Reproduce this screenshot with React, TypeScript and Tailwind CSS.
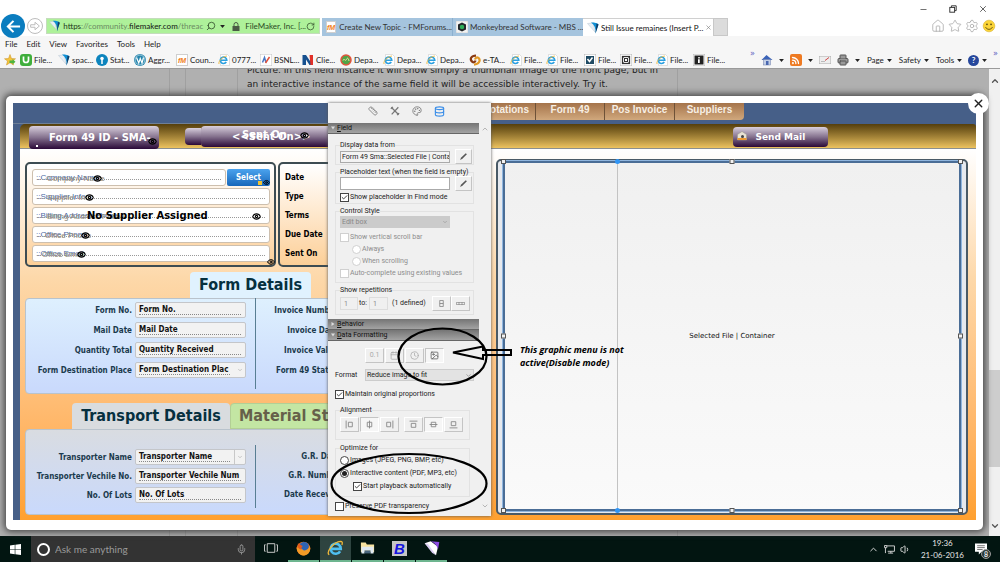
import type { ReactNode } from 'react';
import {
  Calendar,
  Check,
  ChevronDown,
  ChevronUp,
  Clock,
  Database,
  Eye,
  Home,
  Image as ImageIcon,
  Mic,
  Minus,
  Palette,
  Printer,
  RotateCw,
  Rss,
  Ruler,
  Search,
  Settings,
  Star,
  Volume1,
  X,
} from 'lucide-react';

/* ---------- small logos ---------- */

function FoldLogo({ className = 'size-3' }: { className?: string }) {
  return (
    <svg viewBox="0 0 24 24" className={className}>
      <path d="M1 3 L13 2 L16 20 Z" fill="#e6eef5" stroke="#b9c7d3" strokeWidth="1" />
      <path d="M8 1 C16 1 21 2 23 5 L17 23 C18 13 15 6 8 1 Z" fill="#0f8fd4" />
      <path d="M19 3 L23 5 L17 23 Z" fill="#123a63" />
    </svg>
  );
}

function ExplorerLogo({ className = 'size-3' }: { className?: string }) {
  return (
    <svg viewBox="0 0 24 24" className={className} fill="none">
      <path d="M18.5 16 A7.2 7.2 0 1 1 19.5 12.5 H7" stroke="#4fc0f2" strokeWidth="3.6" />
      <path d="M3 21 C-2 16 10 3 19 2 C22 2 22 4 21 7" stroke="#f0b93a" strokeWidth="1.8" />
    </svg>
  );
}

function FavLogo({ kind }: { kind: string }) {
  if (kind === 'fold') return <FoldLogo />;
  if (kind === 'ie') {
    return (
      <svg viewBox="0 0 24 24" className="size-3" fill="none">
        <path d="M5 1 H19 L23 5 V23 H5 Z" fill="#fff" stroke="#c3c3c3" />
        <path d="M16.5 16 A6.4 6.4 0 1 1 17.5 12.5 H6" stroke="#2a9fe0" strokeWidth="3.4" />
        <path d="M2 20 C0 15 9 5 18 4" stroke="#f0b93a" strokeWidth="1.8" />
      </svg>
    );
  }
  if (kind === 'udemy') {
    return (
      <svg viewBox="0 0 24 24" className="size-3" fill="none">
        <rect width="24" height="24" rx="6" fill="#3fae3c" />
        <path d="M7 5 V12 A5 5 0 0 0 17 12 V5" stroke="#fff" strokeWidth="3.4" />
      </svg>
    );
  }
  if (kind === 'stat') {
    return (
      <svg viewBox="0 0 24 24" className="size-3">
        <circle cx="12" cy="12" r="12" fill="#0d84bd" />
        <circle cx="12" cy="9" r="3.5" fill="#fff" />
        <path d="M10.5 10 H13.5 V20 H10.5 Z" fill="#fff" />
      </svg>
    );
  }
  if (kind === 'wp') {
    return (
      <svg viewBox="0 0 24 24" className="size-3" fill="none">
        <circle cx="12" cy="12" r="12" fill="#2585ad" />
        <circle cx="12" cy="12" r="9.8" stroke="#fff" strokeWidth="1" />
        <path d="M5 7 L9.5 18 L12.5 9 L16 18 L19 7" stroke="#fff" strokeWidth="2.4" />
      </svg>
    );
  }
  if (kind === 'fm') {
    return (
      <span className="flex size-3 items-center justify-center border border-[#cfcfcf] bg-white font-['Liberation_Sans'] text-[7px] font-bold italic leading-none text-[#f08020]">
        fM
      </span>
    );
  }
  if (kind === 'bsnl') {
    return (
      <svg viewBox="0 0 24 24" className="size-3" fill="none">
        <rect x=".5" y=".5" width="23" height="23" fill="#fff" stroke="#c3c3c3" />
        <path d="M5 17 L9 7 L12 17" stroke="#4a78c4" strokeWidth="3" />
        <path d="M11 18 L19 6" stroke="#e0503a" strokeWidth="3" />
      </svg>
    );
  }
  if (kind === 'clie') {
    return (
      <svg viewBox="0 0 24 24" className="size-3">
        <path d="M1 2 H8 L16 14 V2 H22 V22 H15 L8 11 V22 H1 Z" fill="#16508f" />
        <path d="M15 2 H22 V22 H17 Z" fill="#e03028" />
      </svg>
    );
  }
  if (kind === 'seal') {
    return (
      <svg viewBox="0 0 24 24" className="size-3" fill="none">
        <circle cx="12" cy="12" r="10" fill="#52a447" stroke="#e2533c" strokeWidth="3" />
        <path d="M6 13 C8 7 11 16 13 11 S17 9 18 14" stroke="#f1dfa0" strokeWidth="2" />
      </svg>
    );
  }
  if (kind === 'etax') {
    return (
      <svg viewBox="0 0 24 24" className="size-3" fill="none">
        <path d="M14 3 C4 3 2 10 5 14 S12 17 13 13" stroke="#8a3a12" strokeWidth="4.5" />
        <path d="M10 21 C20 21 23 13 20 9 S13 7 12 11" stroke="#e39a25" strokeWidth="4.5" />
      </svg>
    );
  }
  if (kind === 'check') {
    return (
      <svg viewBox="0 0 24 24" className="size-3" fill="none">
        <rect x=".5" y=".5" width="23" height="23" fill="#fff" stroke="#b5b5b5" />
        <rect x="4" y="4" width="16" height="16" fill="#1f4a63" />
        <path d="M7 10 L11 15 L17 7" stroke="#fff" strokeWidth="3" />
      </svg>
    );
  }
  if (kind === 'square') {
    return (
      <svg viewBox="0 0 24 24" className="size-3" fill="none">
        <rect x=".5" y=".5" width="23" height="23" fill="#fff" stroke="#b5b5b5" />
        <rect x="5" y="5" width="14" height="14" stroke="#333" strokeWidth="2.5" />
        <path d="M5 5 L19 19 M19 5 L5 19" stroke="#333" />
        <rect x="9" y="9" width="6" height="6" fill="#fff" stroke="#333" strokeWidth="2" />
      </svg>
    );
  }
  return (
    <svg viewBox="0 0 24 24" className="size-3">
      <rect x=".5" y=".5" width="23" height="23" fill="#fff" stroke="#b5b5b5" />
      <rect x="3" y="3" width="18" height="18" fill="#222" />
      <path d="M10.5 6 H13.5 V9 H10.5 Z M10 10.5 H13.5 V18 H10 Z" fill="#fff" />
    </svg>
  );
}

function Caret() {
  return (
    <svg viewBox="0 0 8 5" className="h-[3px] w-[5px]">
      <path d="M0 0 H8 L4 5 Z" fill="#222" />
    </svg>
  );
}

/* ---------- browser chrome ---------- */

const favorites = [
  { kind: 'udemy', label: 'File...', w: 'w-[38px]' },
  { kind: 'fold', label: 'spac...', w: 'w-[38px]' },
  { kind: 'stat', label: 'Stat...', w: 'w-[38px]' },
  { kind: 'wp', label: 'Aggr...', w: 'w-[42px]' },
  { kind: 'fm', label: 'Coun...', w: 'w-[42px]' },
  { kind: 'ie', label: '0777...', w: 'w-[42px]' },
  { kind: 'bsnl', label: 'BSNL...', w: 'w-[42px]' },
  { kind: 'clie', label: 'Clie...', w: 'w-[38px]' },
  { kind: 'seal', label: 'Depa...', w: 'w-[43px]' },
  { kind: 'ie', label: 'Depa...', w: 'w-[43px]' },
  { kind: 'ie', label: 'Depa...', w: 'w-[43px]' },
  { kind: 'etax', label: 'e-TA...', w: 'w-[41px]' },
  { kind: 'ie', label: 'File...', w: 'w-[36px]' },
  { kind: 'ie', label: 'File...', w: 'w-[38px]' },
  { kind: 'check', label: 'File...', w: 'w-[36px]' },
  { kind: 'square', label: 'File...', w: 'w-[36px]' },
  { kind: 'ie', label: 'File...', w: 'w-[37px]' },
  { kind: 'info', label: 'File...', w: 'w-[36px]' },
];

function BrowserTop() {
  return (
    <header className="relative flex h-9 items-end bg-white text-[8px] text-[#222]">
      <div className="absolute right-[12px] top-[4px] flex items-center gap-[21px] text-[#444]">
        <button aria-label="Minimize"><Minus className="size-[9px]" /></button>
        <button aria-label="Restore">
          <svg viewBox="0 0 10 10" className="size-[8px]" fill="none" stroke="#333" strokeWidth="1.2">
            <path d="M3 3 V1 H9 V7 H7" />
            <rect x="1" y="3" width="6" height="6" />
          </svg>
        </button>
        <button aria-label="Close"><X className="size-[10px]" /></button>
      </div>
      <button aria-label="Back" className="mb-[-2px] ml-px flex size-6 shrink-0 items-center justify-center rounded-full bg-[#0b7dbf]">
        <svg viewBox="0 0 16 16" className="size-[15px]" fill="none" stroke="#fff" strokeWidth="2.2">
          <path d="M15 8 H2.5 M8 2 L2 8 L8 14" />
        </svg>
      </button>
      <button aria-label="Forward" className="mb-[2px] ml-[2px] flex size-4 shrink-0 items-center justify-center rounded-full border border-[#bdbdbd]">
        <svg viewBox="0 0 16 16" className="size-[10px]" fill="none" stroke="#bdbdbd" strokeWidth="1.6">
          <path d="M1 6 H8 V2 L15 8 L8 14 V10 H1 Z" />
        </svg>
      </button>
      <div className="mb-[2px] ml-[3px] flex h-4 w-[274px] shrink-0 items-center border border-[#c4dcbc] bg-[#aef19a] pl-[2px] pr-1">
        <FoldLogo />
        <span className="ml-[3px] w-[141px] shrink-0 whitespace-nowrap text-[#6b8b62]">
          <span className="text-[#1e3a18]">https</span>://community.<span className="text-[#111]">filemaker.com</span>/threac
        </span>
        <Search className="ml-[2px] size-[10px] shrink-0 -scale-x-100 text-[#35502e]" />
        <span className="ml-1"><Caret /></span>
        <svg viewBox="0 0 16 18" className="ml-[7px] h-[9px] w-[8px] shrink-0" fill="none">
          <path d="M4 8 V5 A4 4 0 0 1 12 5 V8" stroke="#4a5a45" strokeWidth="2" />
          <rect x="1" y="8" width="14" height="10" fill="#4a5a45" />
        </svg>
        <span className="ml-[5px] flex-1 whitespace-nowrap text-[#2c4a25]">FileMaker, Inc. [...</span>
        <RotateCw className="size-[9px] shrink-0 text-[#35502e]" />
      </div>
      <nav className="ml-[2px] flex h-[18px] shrink-0 text-[#333]">
        <a href="#forums" className="flex w-[131px] items-center gap-[3px] whitespace-nowrap border-r border-[#8cb0cf] bg-[#a5c4de] pl-1">
          <FavLogo kind="fm" />
          Create New Topic - FMForums...
        </a>
        <a href="#mbs" className="flex w-[130px] items-center gap-[2px] whitespace-nowrap bg-[#a5c4de] pl-[3px]">
          <svg viewBox="0 0 24 24" className="size-3 shrink-0">
            <rect width="24" height="24" fill="#f3f3f3" stroke="#bbb" />
            <path d="M12 3 L20 7 V17 L12 21 L4 17 V7 Z" fill="#23262a" />
            <circle cx="12" cy="12" r="4.5" fill="#2fae5a" />
          </svg>
          Monkeybread Software - MBS ...
        </a>
        <a href="#thread" className="flex w-[130px] items-center gap-[2px] border-t border-[#d0d0d0] bg-white pl-1 pr-[3px] text-[#111]">
          <span className="shrink-0"><FoldLogo /></span>
          <span className="whitespace-nowrap">Still Issue remaines (Insert P...</span>
          <X className="ml-auto size-[7px] shrink-0 text-[#777]" />
        </a>
        <button aria-label="New tab" className="w-[15px] border border-[#c8c8c8] bg-[#dcdcdc]" />
      </nav>
      <div className="mb-[3px] ml-auto mr-1 flex gap-[3px] text-[#a5a5a5]">
        <Home className="size-[14px]" strokeWidth={1.3} />
        <Star className="size-[14px]" strokeWidth={1.3} />
        <Settings className="size-[14px]" strokeWidth={1.3} />
        <svg viewBox="0 0 24 24" className="size-[14px]" fill="none">
          <circle cx="12" cy="12" r="10" fill="#fbd437" stroke="#d8b12a" />
          <circle cx="8.5" cy="9" r="1.5" fill="#5a4a10" />
          <circle cx="15.5" cy="9" r="1.5" fill="#5a4a10" />
          <path d="M6 14 C9 19 15 19 18 14" stroke="#5a4a10" strokeWidth="1.5" />
        </svg>
      </div>
    </header>
  );
}

function BrowserBars() {
  return (
    <div className="border-b border-[#9a9a9a] bg-[#f6f6f6] text-[8px] text-[#222]">
      <nav className="flex h-4 items-center gap-[9px] pl-[5px]">
        {['File', 'Edit', 'View', 'Favorites', 'Tools', 'Help'].map((m) => (
          <button key={m}>{m}</button>
        ))}
      </nav>
      <div className="flex h-4 items-center">
        <span className="flex w-5 shrink-0 pl-1">
          <svg viewBox="0 0 24 24" className="size-3">
            <path d="M12 1 L15 9 L23 9.5 L17 14 L19 22 L12 17.5 L5 22 L7 14 L1 9.5 L9 9 Z" fill="#f5c33b" stroke="#c98f1c" />
            <path d="M11 13 H17 V10 L23 15.5 L17 21 V18 H11 Z" fill="#4fb53f" />
          </svg>
        </span>
        {favorites.map((f, i) => (
          <a key={i} href={`#fav-${i}`} className={`flex shrink-0 items-center gap-[2px] whitespace-nowrap ${f.w}`}>
            <span className="shrink-0"><FavLogo kind={f.kind} /></span>
            {f.label}
          </a>
        ))}
        <div className="ml-auto flex items-center gap-[6px] whitespace-nowrap pr-[2px]">
          <span className="-mt-3 font-['DejaVu_Sans',sans-serif] text-[#5a5ac0]">»</span>
          <svg viewBox="0 0 24 24" className="size-3">
            <path d="M1 12 L11 2 L23 12 Z" fill="#3a63b8" />
            <rect x="5" y="11" width="14" height="11" fill="#c3cfe6" stroke="#6a7ba8" />
            <rect x="10" y="14" width="5" height="8" fill="#4a68b0" />
          </svg>
          <Caret />
          <span className="flex size-3 items-center justify-center rounded-[2px] bg-[#ee7a22]"><Rss className="size-[9px] text-white" strokeWidth={3.5} /></span>
          <Caret />
          <svg viewBox="0 0 24 16" className="h-2 w-3" fill="none">
            <rect x=".5" y=".5" width="23" height="15" fill="#eee" stroke="#aaa" />
            <path d="M4 11 H12" stroke="#888" />
            <path d="M12 9 L20 3" stroke="#d04848" strokeWidth="2" />
          </svg>
          <Printer className="size-3 fill-[#999] text-[#555]" />
          <Caret />
          <button className="flex items-center gap-[3px] pl-px">Page <Caret /></button>
          <button className="flex items-center gap-[3px] pl-px">Safety <Caret /></button>
          <button className="flex items-center gap-[3px] pl-px">Tools <Caret /></button>
          <button className="flex items-center gap-[3px]">
            <span className="flex size-[11px] items-center justify-center rounded-full bg-[#26479c] font-bold text-white">?</span>
            <Caret />
          </button>
          <span className="-mt-3 font-['DejaVu_Sans',sans-serif] text-[#5a5ac0]">»</span>
        </div>
      </div>
    </div>
  );
}

/* ---------- layout form, left side ---------- */

function LineText({ text, className = '' }: { text: string; className?: string }) {
  return (
    <span className={`relative block whitespace-nowrap ${className}`}>
      <span className="absolute inset-x-0 bottom-[2px] border-b border-dotted border-[#888]" />
      {text}
    </span>
  );
}

function SupplierRow({ label, shadow, eye, children }: { label: string; shadow: string; eye: string; children?: ReactNode }) {
  return (
    <div className="flex gap-px">
      <div className="relative h-[17px] flex-1 rounded-[3px] border border-[#cdbfae] bg-white pl-[3px] text-[8px] leading-[15px] text-[#4a6aa5]">
        {label}
        <span className={`absolute top-px text-[#8d8778] ${shadow}`}>{label.slice(2)}</span>
        <span className="absolute bottom-[5px] left-1 right-1 border-b border-dotted border-[#999]" />
        <Eye className={`absolute top-1 size-[9px] text-black ${eye}`} strokeWidth={3} />
      </div>
      {children}
    </div>
  );
}

function DetailRow({ label, value, kind }: { label: string; value: string; kind?: 'select' | 'combo' }) {
  return (
    <div className="flex h-4 items-center gap-[3px]">
      <span className="w-[106px] shrink-0 whitespace-nowrap pt-[2px] text-right text-[8px] text-[#1b3a4d]">{label}</span>
      <div className="flex h-4 w-[111px] rounded-[2px] border border-[#c4c6ca] bg-[#f2f2f2] text-[8px] leading-[13px] text-[#111]">
        <LineText text={value} className="ml-[3px] mr-1 flex-1" />
        {kind && (
          <span className={`flex w-[11px] items-center justify-center ${kind === 'combo' ? 'border-l border-[#c8c8c8]' : ''}`}>
            <ChevronDown className="size-[6px] text-[#999]" />
          </span>
        )}
      </div>
    </div>
  );
}

function SideLabels({ items, className }: { items: string[]; className: string }) {
  return (
    <div className={`flex shrink-0 flex-col text-right text-[8px] leading-4 text-[#1b3a4d] ${className}`}>
      {items.map((t) => (
        <span key={t} className="whitespace-nowrap">{t}</span>
      ))}
    </div>
  );
}

function FormSide() {
  return (
    <section className="flex min-w-0 flex-col overflow-hidden bg-[#465f88] font-['DejaVu_Sans_Condensed','DejaVu_Sans',sans-serif] font-bold">
      <div className="h-[21px] border-b border-[#6e7f97]" />
      <div className="ml-[7px] flex h-6 shrink-0 items-start rounded-tl-[5px] bg-linear-to-b from-[#553f0c] to-[#edc35f] pt-[2px] font-['DejaVu_Sans',sans-serif] text-[10px] text-white">
        <div className="relative ml-[9px] h-[23px] w-[130px] shrink-0 rounded bg-linear-to-b from-[#d9d0dd] via-[#85728e] to-[#2b0838] pl-5 pt-[6px] leading-[12px]">
          Form 49 ID - SMA-
          <Eye className="absolute bottom-[3px] right-[2px] size-[9px] text-black" strokeWidth={3} />
          <span className="absolute bottom-[2px] left-[7px] size-[2px] bg-white" />
        </div>
        <div className="mt-[2px] ml-[26px] h-[17px] w-4 shrink-0 rounded-l bg-linear-to-b from-[#d9d0dd] via-[#85728e] to-[#2b0838]" />
        <div className="relative h-[21px] w-[160px] shrink-0 rounded-l bg-linear-to-b from-[#d9d0dd] via-[#85728e] to-[#2b0838] pl-[31px] pt-[5px] leading-[12px]">
          &lt;&lt;Sent On&gt;&gt;
          <span className="absolute left-[41px] top-[3px]">Sent On</span>
          <Eye className="absolute left-[99px] top-[5px] size-[9px] text-black" strokeWidth={3} />
        </div>
      </div>
      <div className="ml-[7px] flex-1 border-t border-[#8a8f90] bg-linear-to-b from-white via-[#fdd8a9] via-35% to-[#ffa02e] pb-[5px] pl-[5px] pt-[13px]">
        <div className="flex gap-[2px]">
          <div className="relative flex h-[105px] w-[251px] shrink-0 flex-col gap-[2px] rounded-[5px] border-2 border-[#3d4c52] bg-linear-to-b from-white to-[#fccf97] pl-[5px] pr-1 pt-[5px] font-['Liberation_Sans',sans-serif] font-normal">
            <SupplierRow label="::Company Name" shadow="left-[14px]" eye="left-[60px]">
              <button className="relative h-[17px] w-[43px] rounded-[2px] bg-linear-to-b from-[#4ba3ee] to-[#1767ba] font-['DejaVu_Sans_Condensed','DejaVu_Sans',sans-serif] text-[8px] font-bold text-white">
                Select
                <span className="absolute bottom-px right-[8px] size-1 bg-[#f1c232]" />
                <Eye className="absolute bottom-0 right-0 size-[7px] text-black" strokeWidth={3} />
              </button>
            </SupplierRow>
            <SupplierRow label="::Supplier Info" shadow="left-[14px]" eye="left-[52px]" />
            <SupplierRow label="::Billing Address Phone" shadow="left-[14px]" eye="right-2" />
            <SupplierRow label="::Office Phone" shadow="left-[12px]" eye="left-[48px]" />
            <SupplierRow label="::Office Email" shadow="left-[9px]" eye="left-[44px]" />
            <span className="absolute left-[60px] top-[44px] whitespace-nowrap font-['DejaVu_Sans',sans-serif] text-[10px] font-bold leading-4 text-black">No Supplier Assigned</span>
            <Eye className="absolute -bottom-px -right-px size-[8px] text-black" strokeWidth={3} />
          </div>
          <div className="flex h-[105px] w-[120px] shrink-0 flex-col gap-[3px] rounded-[5px] border-2 border-[#3d4c52] bg-linear-to-b from-white to-[#fccf97] pl-[5px] pt-[6px] text-[8px] leading-4 text-black">
            {['Date', 'Type', 'Terms', 'Due Date', 'Sent On'].map((t) => (
              <span key={t}>{t}</span>
            ))}
          </div>
        </div>

        <h2 className="ml-[165px] mt-[5px] flex h-[26px] w-[121px] items-center justify-center whitespace-nowrap rounded-t bg-[#e0f2fe] text-[16px] text-[#06303f]">Form Details</h2>
        <div className="flex h-24 w-[340px] rounded-l border border-[#b9c3cc] bg-linear-to-b from-[#def0fe] to-[#c9d9fc] pt-[3px]">
          <div className="flex flex-col gap-1">
            <DetailRow label="Form No." value="Form No." />
            <DetailRow label="Mail Date" value="Mail Date" />
            <DetailRow label="Quantity Total" value="Quantity Received" />
            <DetailRow label="Form Destination Place" value="Form Destination Plac" kind="select" />
          </div>
          <div className="-mt-1 ml-[9px] h-[91px] w-px bg-[#587e93]" />
          <SideLabels items={['Invoice Number', 'Invoice Date', 'Invoice Value', 'Form 49 Status']} className="w-[82px] gap-1 pt-px" />
        </div>

        <div className="ml-[47px] mt-[9px] flex h-[26px] w-[340px] text-[16px]">
          <h2 className="flex w-[158px] shrink-0 items-center justify-center whitespace-nowrap rounded-t bg-[#d9dcdf] text-[#06303f]">Transport Details</h2>
          <h2 className="flex w-[180px] shrink-0 items-center whitespace-nowrap rounded-t border border-[#b2cf95] bg-[#c3e6a3] pl-2 text-[#66604a]">Material Status</h2>
        </div>
        <div className="flex h-[86px] w-[340px] rounded-l border border-[#b9c3cc] bg-linear-to-b from-[#d9dce1] to-[#c9d9fc] pt-[19px]">
          <div className="flex flex-col gap-[3px]">
            <DetailRow label="Transporter Name" value="Transporter Name" kind="combo" />
            <DetailRow label="Transporter Vechile No." value="Transporter Vechile Num" />
            <DetailRow label="No. Of Lots" value="No. Of Lots" />
          </div>
          <div className="-mt-1 ml-[9px] h-[63px] w-px bg-[#587e93]" />
          <SideLabels items={['G.R. Date', 'G.R. Number', 'Date Receved']} className="w-[84px] gap-[3px]" />
        </div>
      </div>
    </section>
  );
}

/* ---------- inspector palette ---------- */

function Group({ title, className = '', children }: { title: string; className?: string; children: ReactNode }) {
  return (
    <fieldset className={`border border-[#e2e2e2] pl-1 ${className}`}>
      <legend className="h-2 whitespace-nowrap leading-[8px] text-[#222]">{title}</legend>
      {children}
    </fieldset>
  );
}

function Tick({ label, type = 'checkbox', name, checked, disabled, className = '' }: {
  label: string;
  type?: 'checkbox' | 'radio';
  name?: string;
  checked?: boolean;
  disabled?: boolean;
  className?: string;
}) {
  const round = type === 'radio';
  return (
    <label className={`flex h-3 items-center gap-px whitespace-nowrap ${disabled ? 'text-[#8d8d8d]' : 'text-[#222]'} ${className}`}>
      <span className="relative flex size-[9px] shrink-0 items-center justify-center">
        <input
          type={type}
          name={name}
          defaultChecked={checked}
          disabled={disabled}
          className={`size-[9px] appearance-none border bg-white ${round ? 'rounded-full' : ''} ${disabled ? 'border-[#d0d0d0]' : 'border-[#444]'}`}
        />
        {checked && !round && <Check className="pointer-events-none absolute size-[7px]" strokeWidth={3} />}
        {checked && round && <span className="pointer-events-none absolute size-[5px] rounded-full bg-[#222]" />}
      </span>
      {label}
    </label>
  );
}

function Tool({ label, pressed, className = 'w-[19px]', children }: { label: string; pressed?: boolean; className?: string; children: ReactNode }) {
  return (
    <button
      aria-label={label}
      className={`flex h-[15px] items-center justify-center border text-[#aaa] ${pressed ? 'border-b-white border-r-white border-l-[#c4c4c4] border-t-[#c4c4c4] bg-[#f6f6f6]' : 'border-b-[#c4c4c4] border-r-[#c4c4c4] border-l-white border-t-white bg-[#f0f0f0]'} ${className}`}
    >
      {children}
    </button>
  );
}

function SlantedPencil() {
  return (
    <svg viewBox="0 0 16 16" className="size-[9px]">
      <path d="M2 14 L3.500 10 L12 2 L14 4 L6 12 Z" fill="#555" />
    </svg>
  );
}

function SectionBar({ title, open }: { title: string; open?: boolean }) {
  return (
    <h3 className="flex h-[11px] items-center gap-[2px] border-b border-[#666] bg-linear-to-b from-[#757575] to-[#a3a3a3] pl-[3px] leading-none text-[#111]">
      <svg viewBox="0 0 8 8" className="size-1">
        <path d={open ? 'M0 1 H8 L4 7 Z' : 'M1 0 L7 4 L1 8 Z'} fill="#ddd" />
      </svg>
      <span><u>{title[0]}</u>{title.slice(1)}</span>
    </h3>
  );
}

const alignIcons = [
  { label: 'Left', d: 'M2 1 V15 M6 4 H13 V12 H6 Z' },
  { label: 'Center', d: 'M8 1 V15 M4 4 H12 V12 H4 Z' },
  { label: 'Right', d: 'M14 1 V15 M3 4 H10 V12 H3 Z' },
  { label: 'Top', d: 'M1 2 H15 M4 6 H12 V13 H4 Z' },
  { label: 'Middle', d: 'M1 8 H15 M4 4 H12 V12 H4 Z' },
  { label: 'Bottom', d: 'M1 14 H15 M4 3 H12 V10 H4 Z' },
];

function Inspector() {
  return (
    <aside className="relative z-10 h-[413px] bg-[#f0f0f0] font-['Roboto',sans-serif] text-[7px] text-[#222] shadow-[0_0_3px_#555]">
      <div className="flex h-5 items-center justify-center gap-3 pb-1 pr-[6px] text-[#777]">
        <Ruler className="size-[10px]" />
        <svg viewBox="0 0 24 24" className="size-[10px]" fill="none" stroke="#777" strokeWidth="3">
          <path d="M3 3 L21 21 M20 3 L4 20 M2 7 L7 2 M17 22 L22 17" />
        </svg>
        <Palette className="size-[10px]" />
        <Database className="size-[11px] text-[#3d8fe8]" strokeWidth={2.5} />
      </div>
      <div className="flex">
        <div className="w-[151px] shrink-0">
          <SectionBar title="Field" open />
          <div className="flex flex-col gap-[3px] pb-1 pl-[7px] pr-[5px] pt-[7px]">
            <Group title="Display data from" className="h-6">
              <div className="flex items-center gap-[5px]">
                <input aria-label="Display data from" readOnly value="Form 49 Sma::Selected File | Contai" className="h-3 w-[110px] border border-[#aaa] bg-[#f3f3f3] pl-px" />
                <Tool label="Edit source" className="w-[17px]"><SlantedPencil /></Tool>
              </div>
            </Group>
            <Group title="Placeholder text (when the field is empty)" className="h-9">
              <div className="flex items-center gap-[5px]">
                <input aria-label="Placeholder text" className="h-[13px] w-[110px] border border-[#aaa] bg-white" />
                <Tool label="Edit placeholder" className="w-[17px]"><SlantedPencil /></Tool>
              </div>
              <Tick label="Show placeholder in Find mode" checked />
            </Group>
            <Group title="Control Style" className="h-[76px]">
              <div className="relative mb-[3px] mt-px w-[110px]">
                <select aria-label="Control style" disabled className="block h-3 w-full appearance-none bg-[#cbcbcb] pl-[2px] text-[#888]">
                  <option>Edit box</option>
                </select>
                <ChevronDown className="pointer-events-none absolute right-[2px] top-[3px] size-[6px] text-[#888]" />
              </div>
              <Tick label="Show vertical scroll bar" disabled />
              <Tick label="Always" type="radio" name="scroll" disabled className="ml-3" />
              <Tick label="When scrolling" type="radio" name="scroll" disabled className="ml-3" />
              <Tick label="Auto-complete using existing values" disabled />
            </Group>
            <Group title="Show repetitions" className="h-[29px]">
              <div className="flex items-center pt-[2px]">
                <input aria-label="From repetition" readOnly value="1" className="h-[13px] w-[18px] border border-[#ddd] pl-[3px] text-[#888]" />
                <span className="w-[11px] pl-px">to:</span>
                <input aria-label="To repetition" readOnly value="1" className="h-[13px] w-[19px] border border-[#ddd] pl-[3px] text-[#888]" />
                <span className="w-[44px] whitespace-nowrap pl-1">(1 defined)</span>
                <Tool label="Vertical"><svg viewBox="0 0 8 8" className="size-[7px]" fill="none" stroke="#888"><path d="M2 .5 H6 V7.5 H2 Z M2 4 H6" /></svg></Tool>
                <Tool label="Horizontal"><svg viewBox="0 0 12 4" className="h-[3px] w-[9px]" fill="none" stroke="#888"><path d="M.5 .5 H11.5 V3.5 H.5 Z M4 0 V4 M8 0 V4" /></svg></Tool>
              </div>
            </Group>
          </div>
          <SectionBar title="Behavior" />
          <SectionBar title="Data Formatting" open />
          <div className="pl-[7px] pr-[5px] pt-[7px]">
            <div className="flex gap-px pl-[30px]">
              <Tool label="Number">0.1</Tool>
              <Tool label="Date"><Calendar className="size-[9px]" /></Tool>
              <Tool label="Time"><Clock className="size-[9px]" /></Tool>
              <Tool label="Graphic" pressed><ImageIcon className="size-[9px] text-[#555]" /></Tool>
            </div>
            <label className="relative mt-[6px] flex h-3 items-center">
              <span className="w-[30px] shrink-0">Format</span>
              <select className="h-3 w-[109px] appearance-none border border-[#ccc] bg-[#e3e3e3] pl-px">
                <option>Reduce image to fit</option>
              </select>
              <ChevronDown className="pointer-events-none absolute right-[2px] top-[3px] size-[7px] text-[#777]" />
            </label>
            <Tick label="Maintain original proportions" checked className="mt-[7px]" />
            <Group title="Alignment" className="mr-1 mt-[6px] h-[34px]">
              <div className="flex gap-px pt-[3px]">
                {alignIcons.map((a, i) => (
                  <Tool key={a.label} label={a.label} pressed={a.label === 'Center' || a.label === 'Middle'} className={i === 3 ? 'ml-1 w-[19px]' : 'w-[19px]'}>
                    <svg viewBox="0 0 16 16" className="size-[9px]" fill="none" stroke="#888" strokeWidth="1.6"><path d={a.d} /></svg>
                  </Tool>
                ))}
              </div>
            </Group>
            <Group title="Optimize for" className="mr-1 mt-1 h-[53px]">
              <div className="flex flex-col gap-px pt-[2px]">
                <Tick label="Images (JPEG, PNG, BMP, etc)" type="radio" name="optimize" />
                <Tick label="Interactive content (PDF, MP3, etc)" type="radio" name="optimize" checked />
                <Tick label="Start playback automatically" checked className="ml-[13px]" />
              </div>
            </Group>
            <Tick label="Preserve PDF transparency" className="mt-[3px]" />
          </div>
        </div>
        <div className="flex flex-1 flex-col items-center justify-between py-[2px] text-[#999]">
          <ChevronUp className="size-2" />
          <ChevronDown className="size-2" />
        </div>
      </div>

      {/* hand drawn marks */}
      <svg viewBox="0 0 200 413" className="pointer-events-none absolute left-0 top-0 h-[413px] w-[200px] overflow-visible" fill="none" stroke="#000">
        <ellipse cx="114.500" cy="253.500" rx="44" ry="28" strokeWidth="2.200" />
        <ellipse cx="81" cy="380.500" rx="77.500" ry="29.500" strokeWidth="2.200" />
        <path d="M125 249.500 L155 243.500 V247 H183 V252 H155 V256 Z" strokeWidth="2" />
      </svg>
      <p className="absolute left-[192px] top-[240px] whitespace-nowrap font-['Open_Sans','Noto_Sans',sans-serif] text-[9px] font-bold italic leading-[13px] text-black">
        This graphic menu is not
        <br />
        active(Disable mode)
      </p>
    </aside>
  );
}

/* ---------- layout form, right side ---------- */

function Handle({ className }: { className: string }) {
  return <span className={`absolute size-[5px] border border-[#555] bg-[#f2f2f2] ${className}`} />;
}

function ContainerSide() {
  return (
    <section className="flex min-w-0 flex-col bg-[#465f88]">
      <div className="flex h-[21px] items-start font-['Liberation_Sans',sans-serif] text-[10px] font-bold text-[#f7efe4]">
        <nav className="flex h-[17px] divide-x divide-[#6e5238] overflow-hidden rounded-br-[4px] bg-linear-to-b from-[#a5744b] to-[#d0a87d]">
          <a href="#quotations" className="flex w-[45px] justify-end pr-[6px] leading-[13px]">Quotations</a>
          <a href="#form49" className="w-[69px] text-center leading-[13px]">Form 49</a>
          <a href="#pos" className="w-[70px] text-center leading-[13px]">Pos Invoice</a>
          <a href="#suppliers" className="w-[69px] text-center leading-[13px]">Suppliers</a>
        </nav>
      </div>
      <div className="flex h-6 shrink-0 justify-center rounded-tr-[3px] bg-linear-to-b from-[#553f0c] to-[#edc35f] pt-[3px]">
        <button className="ml-[93px] flex h-5 w-[95px] items-center gap-[9px] rounded bg-linear-to-b from-[#d9d0dd] via-[#85728e] to-[#2b0838] pl-1 pt-[2px] font-['DejaVu_Sans',sans-serif] text-[9px] font-bold text-white">
          <svg viewBox="0 0 20 20" className="mb-1 size-[10px]">
            <path d="M1 7 L10 1 L19 7 V18 H1 Z" fill="#e8e2d4" stroke="#998" />
            <path d="M1 14 H19 V18 H1 Z" fill="#ee9a32" />
            <circle cx="11" cy="11" r="3" fill="#444" />
          </svg>
          Send Mail
        </button>
      </div>
      <div className="flex flex-1 border-t border-[#8a8f90] bg-linear-to-b from-white via-[#fdd8a9] via-35% to-[#ffa02e] pb-[5px] pl-[5px] pr-2 pt-[10px]">
        <div className="flex flex-1 rounded-[5px] border-2 border-[#4a5a66] bg-[#e6e9ee] px-[5px] pb-[2px]">
          <div className="relative flex flex-1 items-center justify-center border-2 border-[#4a6d96] bg-linear-to-b from-[#f0f0f0] to-[#fafafa] font-['DejaVu_Sans',sans-serif] text-[7px] text-[#111] outline outline-[#8fb5de]">
            Selected File | Container
            <span className="absolute inset-y-0 left-[112px] w-px bg-[#c3c3c3]" />
            <span className="absolute -top-[4px] left-[110px] size-[5px] rounded-full bg-[#2f95f5]" />
            <span className="absolute -bottom-[4px] left-[110px] size-[5px] rounded-full bg-[#2f95f5]" />
            <Handle className="-left-[4px] -top-[4px]" />
            <Handle className="-right-[4px] -top-[4px]" />
            <Handle className="-bottom-[4px] -left-[4px]" />
            <Handle className="-bottom-[4px] -right-[4px]" />
            <Handle className="-top-[4px] left-1/2 -translate-x-1/2" />
            <Handle className="-bottom-[4px] left-1/2 -translate-x-1/2" />
            <Handle className="-left-[4px] top-1/2 -translate-y-1/2" />
            <Handle className="-right-[4px] top-1/2 -translate-y-1/2" />
          </div>
        </div>
      </div>
    </section>
  );
}

/* ---------- taskbar ---------- */

function TaskButton({ label, active, running = true, children }: { label: string; active?: boolean; running?: boolean; children: ReactNode }) {
  return (
    <button
      aria-label={label}
      className={`flex h-[26px] items-center justify-center border-b-2 ${running ? 'w-[31px] border-[#6db58f]' : 'w-8 border-transparent'} ${active ? 'bg-[#2e4440]' : ''}`}
    >
      {children}
    </button>
  );
}

function Taskbar() {
  return (
    <footer className="flex h-[26px] shrink-0 items-center bg-[#021511] text-[8px] text-[#e4e4e4]">
      <button aria-label="Start" className="flex w-[31px] justify-center">
        <svg viewBox="0 0 22 22" className="size-[11px]" fill="#fff">
          <path d="M0 3 L9.500 1.700 V10.400 H0 Z M10.700 1.500 L22 0 V10.400 H10.700 Z M0 11.600 H9.500 V20.300 L0 19 Z M10.700 11.600 H22 V22 L10.700 20.500 Z" />
        </svg>
      </button>
      <label className="flex h-[26px] w-[224px] items-center bg-[#333] pl-[6px] pr-2">
        <span className="size-[13px] shrink-0 rounded-full border-2 border-white" />
        <input placeholder="Ask me anything" aria-label="Ask me anything" className="ml-[5px] min-w-0 flex-1 bg-transparent text-[10px] placeholder:text-[#9a9a9a]" />
        <Mic className="size-[11px] text-[#999]" />
      </label>
      <div className="flex gap-px">
        <TaskButton label="Task view" running={false}>
          <svg viewBox="0 0 26 18" className="h-[10px] w-[14px]" fill="none" stroke="#ccc" strokeWidth="1.800">
            <path d="M6 1 H20 V17 H6 Z M3 3 H1 V15 H3 M23 3 H25 V15 H23" />
          </svg>
        </TaskButton>
        <TaskButton label="Firefox">
          <svg viewBox="0 0 24 24" className="size-[15px]">
            <circle cx="12" cy="12" r="11" fill="#e8731c" />
            <circle cx="13" cy="9" r="7.500" fill="#2c64b4" />
            <path d="M1 9 C3 13 8 10 10 13 C13 17 19 15 22 8 C25 18 17 24 11 23 C5 22 1 17 1 9 Z" fill="#f39a26" />
            <path d="M3 4 C6 5 8 7 11 8 C9 10 8 11 9 14 C4 13 2 9 3 4 Z" fill="#e25a1a" />
          </svg>
        </TaskButton>
        <TaskButton label="Internet Explorer" active><ExplorerLogo className="size-[17px]" /></TaskButton>
        <TaskButton label="File Explorer">
          <svg viewBox="0 0 24 20" className="h-3 w-[15px]">
            <path d="M1 1 H9 L11 4 H23 V17 H1 Z" fill="#f7e3a0" />
            <path d="M2 8 H22 V19 H17 V14 H7 V19 H2 Z" fill="#dfe9f2" />
            <path d="M7 14 H17 V19 H7 Z" fill="#49657c" />
          </svg>
        </TaskButton>
        <TaskButton label="Busy">
          <span className="flex size-[15px] items-center justify-center bg-[#c6c6c6] font-['Liberation_Sans',sans-serif] text-[15px] font-bold italic leading-none text-[#1414e0]">B</span>
        </TaskButton>
        <TaskButton label="FileMaker">
          <svg viewBox="0 0 24 24" className="size-[16px]">
            <path d="M1 5 L10 2 L21 10 L18 23 Z" fill="#fff" />
            <path d="M10 2 L23 3 L21 14 C19 8 16 4 10 2 Z" fill="#8d4be0" />
            <path d="M1 5 L6 6 L18 23 L12 19 Z" fill="#d9cdf2" />
          </svg>
        </TaskButton>
      </div>
      <div className="ml-auto flex items-center gap-[5px] pr-[9px]">
        <ChevronUp className="size-[11px]" />
        <svg viewBox="0 0 24 20" className="h-[9px] w-[11px]" fill="none" stroke="#ddd" strokeWidth="2">
          <path d="M6 2 H23 V14 H8 M15 14 V18 M9 18 H20 M1 1 H6 V6 H1 Z M3 6 V18" />
        </svg>
        <Volume1 className="size-[11px]" />
        <div className="ml-[5px] text-center leading-[12px]">
          <div>19:36</div>
          <div>21-06-2016</div>
        </div>
        <div className="relative ml-[6px] w-[16px]">
          <svg viewBox="0 0 22 22" className="size-[12px]">
            <path d="M0 1 H22 V16 H12 L7 21 V16 H0 Z" fill="#fff" />
            <path d="M4 5 H18 M4 8.500 H18 M4 12 H14" stroke="#555" strokeWidth="1.500" />
          </svg>
          <span className="absolute -bottom-1 right-0 flex size-[10px] items-center justify-center rounded-full border border-[#999] bg-[#2c3a37] text-[7px] font-bold leading-none">8</span>
        </div>
      </div>
    </footer>
  );
}

export default function App() {
  return (
    <div className="flex min-h-screen flex-col overflow-hidden bg-[#b0b0b0] font-['Lato',sans-serif]">
      <BrowserTop />
      <BrowserBars />
      <main className="flex flex-1">
        <div className="relative min-w-0 flex-1">
          {/* page behind the dialog */}
          <div className="absolute inset-0 flex overflow-hidden">
            <div className="w-[170px] shrink-0 border-r border-[#a0a0a0]" />
            <div className="w-4 shrink-0 border-r border-[#a0a0a0]" />
            <div className="w-[52px] shrink-0 border-r border-[#a0a0a0]" />
            <p className="-mt-[6px] w-[440px] shrink-0 whitespace-nowrap border-r border-[#a0a0a0] pl-[9px] font-['DejaVu_Sans',sans-serif] text-[9px] leading-[14px] text-[#222]">
              Picture. In this field instance it will show simply a thumbnail image of the front page, but in
              <br />
              an interactive instance of the same field it will be accessible interactively. Try it.
            </p>
          </div>
          <div role="dialog" aria-label="Attached image" className="relative mx-[6px] mb-[6px] mt-[27px] rounded-[5px] bg-white px-[7px] pb-[10px] pt-[7px] shadow-[0_0_7px_2px_#444]">
            <div className="grid grid-cols-[315px_163px_1fr] bg-[#ffa231]">
              <FormSide />
              <Inspector />
              <ContainerSide />
            </div>
            <button aria-label="Close image" className="absolute -right-[6px] -top-[3px] flex size-[21px] items-center justify-center rounded-full bg-white">
              <X className="size-[13px] text-[#222]" strokeWidth={2.5} />
            </button>
          </div>
        </div>
        <div className="flex w-[11px] shrink-0 flex-col items-center bg-[#f0f0f0] pb-[5px] pt-[7px]">
          <ChevronUp className="size-[10px] text-[#555]" strokeWidth={3} />
          <div className="flex-[284]" />
          <div className="w-full flex-[97] bg-[#cdcdcd]" />
          <div className="flex-[54]" />
          <ChevronDown className="size-[10px] text-[#555]" strokeWidth={3} />
        </div>
      </main>
      <Taskbar />
    </div>
  );
}
